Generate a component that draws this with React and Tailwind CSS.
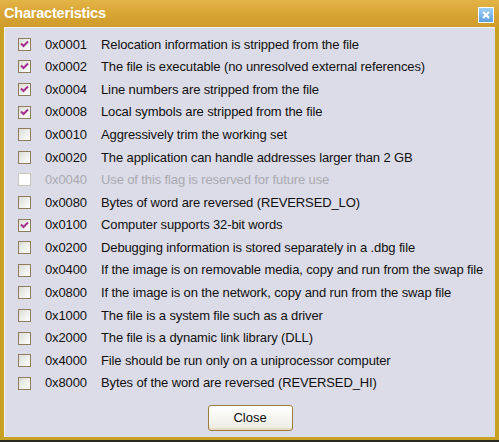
import React from 'react';

const flags = [
  ['0x0001', 'Relocation information is stripped from the file', true],
  ['0x0002', 'The file is executable (no unresolved external references)', true],
  ['0x0004', 'Line numbers are stripped from the file', true],
  ['0x0008', 'Local symbols are stripped from the file', true],
  ['0x0010', 'Aggressively trim the working set', false],
  ['0x0020', 'The application can handle addresses larger than 2 GB', false],
  ['0x0040', 'Use of this flag is reserved for future use', false, true],
  ['0x0080', 'Bytes of word are reversed (REVERSED_LO)', false],
  ['0x0100', 'Computer supports 32-bit words', true],
  ['0x0200', 'Debugging information is stored separately in a .dbg file', false],
  ['0x0400', 'If the image is on removable media, copy and run from the swap file', false],
  ['0x0800', 'If the image is on the network, copy and run from the swap file', false],
  ['0x1000', 'The file is a system file such as a driver', false],
  ['0x2000', 'The file is a dynamic link library (DLL)', false],
  ['0x4000', 'File should be run only on a uniprocessor computer', false],
  ['0x8000', 'Bytes of the word are reversed (REVERSED_HI)', false],
];

function Check({checked, disabled}) {
  return (
    <div
      className={
        disabled
          ? 'w-[13px] h-[13px] border border-[#c9c7ba] bg-white flex items-center justify-center'
          : 'w-[13px] h-[13px] border border-[#8f7c5c] bg-gradient-to-br from-[#dcdcd6] to-white flex items-center justify-center'
      }
    >
      {checked && (
        <svg width="9" height="9" viewBox="0 0 9 9">
          <path d="M1 3.5 L3.5 6 L8 1.5" fill="none" stroke="#a3308f" strokeWidth="2" />
        </svg>
      )}
    </div>
  );
}

export default function App() {
  return (
    <div
      className="w-[499px] h-[442px] flex flex-col bg-[#c9a122] overflow-hidden"
      style={{fontFamily: '"Liberation Sans", Arial, sans-serif'}}
    >
      <div className="h-[27px] flex items-center justify-between pl-[4px] pr-[5px] bg-gradient-to-b from-[#e3b446] via-[#d8a535] to-[#cf9c2c]">
        <span className="text-white font-bold text-[14.5px] tracking-[-0.2px]">Characteristics</span>
        <div className="mt-[3px] w-[16px] h-[16px] border border-white bg-gradient-to-b from-[#9fd0f6] to-[#5b9fdc] flex items-center justify-center">
          <svg width="10" height="10" viewBox="0 0 10 10">
            <path d="M2 2 L8 8 M8 2 L2 8" stroke="white" strokeWidth="2.2" />
          </svg>
        </div>
      </div>
      <div className="flex-1 mx-[4px] mb-[3px] bg-[#dcdce8] border-t border-l border-[#f4f4f8] flex flex-col pt-[5px]">
        {flags.map(([hex, text, checked, disabled]) => (
          <div
            key={hex}
            className={
              'h-[22.6px] flex items-center text-[13px] tracking-[-0.12px] ' +
              (disabled ? 'text-[#a9a9b0]' : 'text-[#101010]')
            }
          >
            <div className="w-[13px] ml-[13px]">
              <Check checked={checked} disabled={disabled} />
            </div>
            <span className="ml-[14px] w-[56px]">{hex}</span>
            <span>{text}</span>
          </div>
        ))}
        <div className="flex justify-center mt-[10px]">
          <button className="w-[85px] h-[26px] rounded-[3px] border border-[#9c7e3a] bg-gradient-to-b from-white to-[#ecebe3] text-[13px] text-[#101010] shadow-[inset_0_-2px_0_#e6dcc0]">
            Close
          </button>
        </div>
      </div>
      <div className="h-[2px] bg-[#2a2a20]" />
    </div>
  );
}
